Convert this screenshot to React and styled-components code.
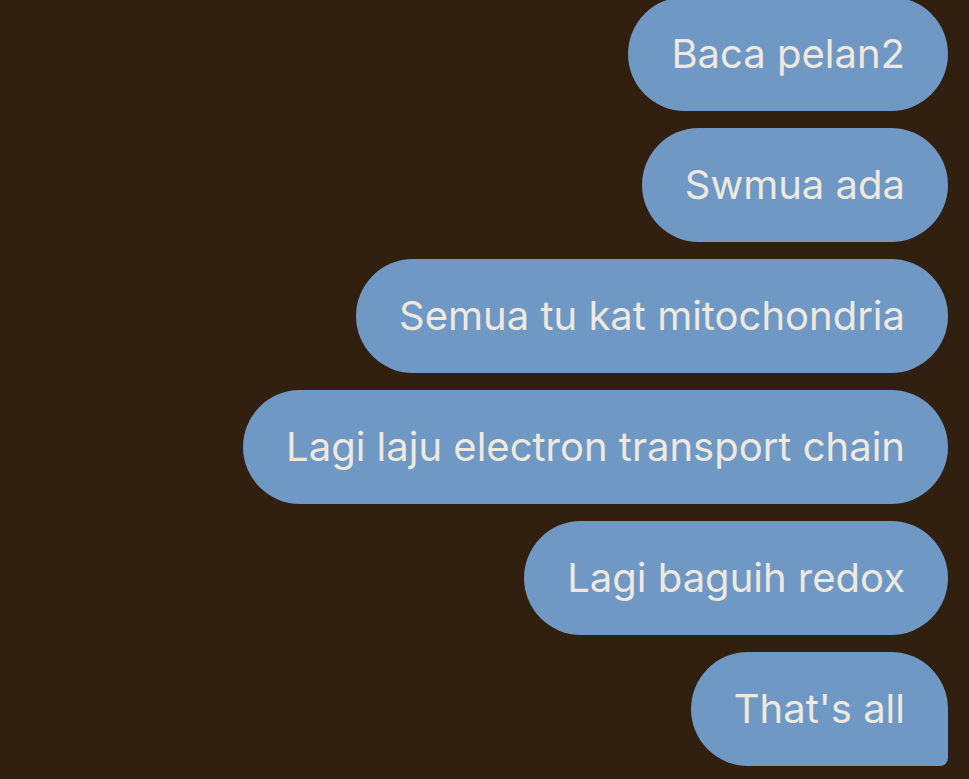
import styled, { createGlobalStyle } from 'styled-components'

const GlobalStyle = createGlobalStyle`
  html, body {
    margin: 0;
    padding: 0;
    background: #311f0f;
    overflow: hidden;
  }
`

const messages = [
  'Baca pelan2',
  'Swmua ada',
  'Semua tu kat mitochondria',
  'Lagi laju electron transport chain',
  'Lagi baguih redox',
  "That's all",
]

const App = () => {
  return (
    <>
      <GlobalStyle />
      <Thread>
        {messages.map((text, i) => (
          <Bubble key={i} $last={i === messages.length - 1}>
            {text}
          </Bubble>
        ))}
      </Thread>
    </>
  )
}

export default App

const Thread = styled.div`
  display: flex;
  flex-direction: column;
  align-items: flex-end;
  gap: 17px;
  width: 969px;
  height: 779px;
  box-sizing: border-box;
  margin-top: -3px;
  padding-right: 21px;
  background: #311f0f;
`

const Bubble = styled.div`
  box-sizing: border-box;
  height: 114px;
  display: flex;
  align-items: center;
  padding: 0 43px;
  background: #6f98c4;
  color: #eee9df;
  font-family: Inter, 'Noto Sans', sans-serif;
  font-size: 40px;
  line-height: 48px;
  white-space: nowrap;
  border-radius: ${p => (p.$last ? '57px 57px 8px 57px' : '57px')};
`
